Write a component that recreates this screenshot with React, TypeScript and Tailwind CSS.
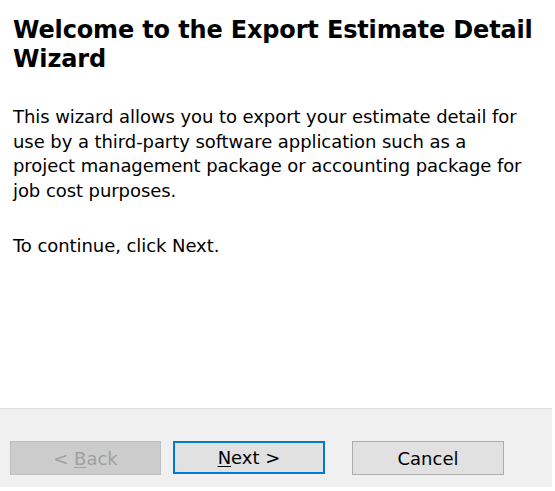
import React from "react";

export default function App() {
  return (
    <div
      className="w-[555px] h-[491px] bg-white flex flex-col text-black"
      style={{ fontFamily: '"DejaVu Sans", Verdana, sans-serif' }}
    >
      <div className="h-[408px] pl-[13px] pr-[4px] pt-[16px]">
        <h1 className="text-[24px] leading-[29px] font-bold tracking-[-0.15px]">
          Welcome to the Export Estimate Detail
          <br />
          Wizard
        </h1>
        <p className="mt-[31px] text-[18px] leading-[24.5px] tracking-[-0.07px] whitespace-nowrap">
          This wizard allows you to export your estimate detail for
          <br />
          use by a third-party software application such as a
          <br />
          project management package or accounting package for
          <br />
          job cost purposes.
        </p>
        <p className="mt-[31px] text-[18px] leading-[24.5px] tracking-[-0.07px]">
          To continue, click Next.
        </p>
      </div>
      <div className="flex-1 border-t border-[#dfdfdf] bg-[#f0f0f0] mr-[3px] mb-[4px] flex items-start pt-[32px] pl-[10px] text-[18px]">
        <button className="w-[151px] h-[34px] bg-[#cccccc] border border-[#bfbfbf] text-[#a0a0a0]">
          &lt; <span className="underline underline-offset-2">B</span>ack
        </button>
        <button className="ml-[12px] w-[152px] h-[33px] bg-[#e1e1e1] border-2 border-[#0078d7] text-black">
          <span className="underline underline-offset-2">N</span>ext &gt;
        </button>
        <button className="ml-[27px] w-[152px] h-[34px] bg-[#e1e1e1] border border-[#adadad] text-black">
          Cancel
        </button>
      </div>
    </div>
  );
}
